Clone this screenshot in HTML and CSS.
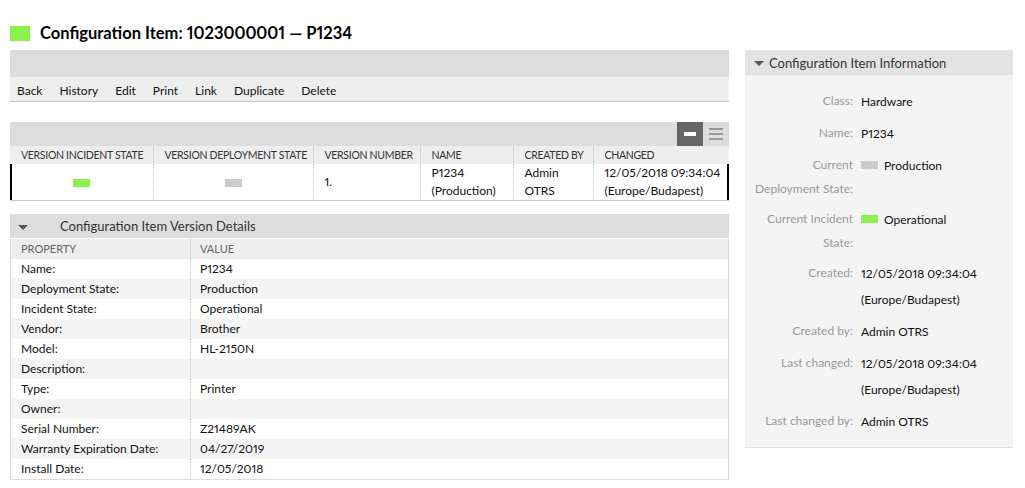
FILE: index.html
```html
<!DOCTYPE html>
<html>
<head>
<meta charset="utf-8">
<link rel="stylesheet" href="styles.css">
</head>
<body>
<div class="page">
  <h1 class="title"><span class="swatch swatch-title"></span>Configuration Item: 1023000001 — P1234</h1>
  <div class="layout">
    <div class="main">
      <div class="actions">
        <div class="actions-top"></div>
        <ul class="menu">
          <li>Back</li><li>History</li><li>Edit</li><li>Print</li><li>Link</li><li>Duplicate</li><li>Delete</li>
        </ul>
      </div>

      <div class="widget versions">
        <div class="widget-head bar-head">
          <span class="icon-btn active"><span class="minus"></span></span>
          <span class="icon-btn menu-icon"><span></span><span></span><span></span></span>
        </div>
        <table class="grid vgrid">
          <colgroup><col style="width:143px"><col style="width:160px"><col style="width:107px"><col style="width:93px"><col style="width:80px"><col style="width:136px"></colgroup>
          <thead>
            <tr><th>Version Incident State</th><th>Version Deployment State</th><th>Version Number</th><th>Name</th><th>Created By</th><th>Changed</th></tr>
          </thead>
          <tbody>
            <tr class="selected">
              <td class="center"><span class="swatch swatch-green"></span></td>
              <td class="center"><span class="swatch swatch-gray"></span></td>
              <td>1.</td>
              <td>P1234<br>(Production)</td>
              <td>Admin<br>OTRS</td>
              <td>12/05/2018 09:34:04<br>(Europe/Budapest)</td>
            </tr>
          </tbody>
        </table>
      </div>

      <div class="widget details">
        <div class="widget-head">
          <span class="tri"></span>
          <span class="head-title">Configuration Item Version Details</span>
        </div>
        <table class="grid dgrid">
          <colgroup><col style="width:180px"><col></colgroup>
          <thead><tr><th>Property</th><th>Value</th></tr></thead>
          <tbody>
            <tr><td>Name:</td><td>P1234</td></tr>
            <tr><td>Deployment State:</td><td>Production</td></tr>
            <tr><td>Incident State:</td><td>Operational</td></tr>
            <tr><td>Vendor:</td><td>Brother</td></tr>
            <tr><td>Model:</td><td>HL-2150N</td></tr>
            <tr><td>Description:</td><td></td></tr>
            <tr><td>Type:</td><td>Printer</td></tr>
            <tr><td>Owner:</td><td></td></tr>
            <tr><td>Serial Number:</td><td>Z21489AK</td></tr>
            <tr><td>Warranty Expiration Date:</td><td>04/27/2019</td></tr>
            <tr><td>Install Date:</td><td>12/05/2018</td></tr>
          </tbody>
        </table>
      </div>
    </div>

    <aside class="sidebar">
      <div class="side-head"><span class="tri tri-side"></span>Configuration Item Information</div>
      <dl class="info">
        <dt>Class:</dt><dd>Hardware</dd>
        <dt>Name:</dt><dd>P1234</dd>
        <dt>Current Deployment State:</dt><dd><span class="swatch swatch-gray inline"></span>Production</dd>
        <dt>Current Incident State:</dt><dd><span class="swatch swatch-green inline"></span>Operational</dd>
        <dt>Created:</dt><dd>12/05/2018 09:34:04 (Europe/Budapest)</dd>
        <dt>Created by:</dt><dd>Admin OTRS</dd>
        <dt>Last changed:</dt><dd>12/05/2018 09:34:04 (Europe/Budapest)</dd>
        <dt>Last changed by:</dt><dd>Admin OTRS</dd>
      </dl>
    </aside>
  </div>
</div>
</body>
</html>
```
FILE: styles.css
```css
* { box-sizing: border-box; }
html, body { margin: 0; padding: 0; background: #fff; }
body {
  font-family: Lato, "Noto Sans", sans-serif;
  font-variant-numeric: proportional-nums;
  color: #000;
  font-size: 12px;
  width: 1025px;
  height: 488px;
  overflow: hidden;
}
.title {
  margin: 0 0 6px;
  padding: 22px 10px 0;
  height: 44px;
  line-height: 22px;
  font-size: 16.5px;
  font-weight: 700;
  color: #000;
  display: flex;
  align-items: center;
}
.swatch { display: inline-block; }
.swatch-title { width: 20px; height: 15px; background: #8bf24d; margin-right: 10px; }
.swatch-green { width: 17px; height: 8px; background: #8bf24d; }
.swatch-gray { width: 17px; height: 8px; background: #cccccc; }
.swatch.inline { width: 17px; height: 8px; margin-right: 6px; vertical-align: 1px; }

.layout { display: flex; gap: 16px; padding: 0 12px 0 10px; align-items: flex-start; }
.main { width: 719px; flex: none; }
.sidebar { width: 268px; flex: none; }

.actions-top { height: 27px; background: #dddddd; }
.menu {
  list-style: none; margin: 0; padding: 0;
  height: 25px; background: #eeeeee; border-bottom: 1px solid #cccccc;
  display: flex; align-items: center;
}
.menu li { padding: 2px 10px 0 7px; font-size: 12px; color: #111; }

.widget { margin-top: 20px; }
.details { margin-top: 13px; }
.widget-head {
  height: 24px; background: #dddddd;
  display: flex; align-items: center;
}
.bar-head { justify-content: flex-end; }
.icon-btn { width: 26px; height: 24px; display: flex; align-items: center; justify-content: center; }
.icon-btn.active { background: #666666; }
.minus { width: 12px; height: 4px; background: #fff; }
.menu-icon { flex-direction: column; gap: 3px; width: 26px; }
.menu-icon span { width: 14px; height: 2px; background: #999; }

.grid { border-collapse: collapse; width: 719px; table-layout: fixed; }
.grid th {
  text-align: left; font-weight: 400; text-transform: uppercase;
  font-size: 10.5px; letter-spacing: -0.3px; background: #eeeeee; height: 18px; padding: 0 0 0 11px;
  border-right: 1px solid #d6d6d6; color: #333; white-space: nowrap; overflow: hidden;
}
.grid th:last-child { border-right: 0; }
.grid td { padding: 0 0 0 11px; vertical-align: middle; }
.vgrid td {
  background: #fff; line-height: 18px; height: 36px;
  border-right: 1px dotted #c4c4c4; color: #111;
  border-bottom: 1px solid #cccccc;
}
.vgrid td.center { text-align: center; padding: 0; }
.vgrid td.center .swatch { vertical-align: middle; }
.vgrid tr.selected td:first-child { box-shadow: inset 2px 0 0 #000; }
.vgrid tr.selected td:last-child { box-shadow: inset -2px 0 0 #000; border-right: 0; }

.tri {
  width: 0; height: 0;
  border-left: 5px solid transparent; border-right: 5px solid transparent;
  border-top: 5px solid #555;
  margin: 2px 0 0 8px;
}
.head-title { margin-left: 32px; font-size: 13px; color: #333; }

.dgrid { border: 1px solid #dddddd; border-top: 0; }
.dgrid thead th { color: #666; height: 20px; border-top: 1px solid #fff; font-size: 11px; letter-spacing: 0; }
.dgrid td { height: 20px; line-height: 20px; color: #111; padding-left: 10px; }
.dgrid td:first-child { border-right: 1px dotted #c4c4c4; }
.dgrid th:first-child { padding-left: 10px; }
.dgrid th:last-child { padding-left: 9px; }
.dgrid td:last-child { padding-left: 9px; }
.dgrid tbody tr:nth-child(even) td { background: #f4f4f4; }
.dgrid tbody tr:nth-child(odd) td { background: #fff; }

.side-head {
  height: 25px; background: #e3e3e3;
  display: flex; align-items: center;
  font-size: 13px; color: #333;
}
.tri-side { margin: 1px 5px 0 9px; }
.info {
  margin: 0; background: #f4f4f4; border-bottom: 1px solid #e0e0e0;
  padding: 14px 10px 12px 8px;
  display: grid; grid-template-columns: 100px 1fr; column-gap: 8px; row-gap: 6px;
}
.info dt { text-align: right; color: #999; line-height: 24px; }
.info dd { margin: 0; color: #111; line-height: 26px; }
```
